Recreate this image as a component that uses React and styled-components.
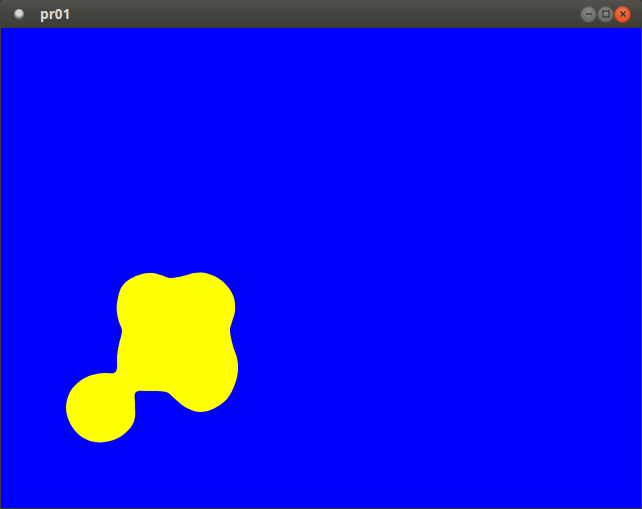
import React from "react";
import styled, { createGlobalStyle } from "styled-components";

const Global = createGlobalStyle`
  html, body { margin: 0; padding: 0; background: #3c3b37; }
  body { width: 642px; height: 509px; overflow: hidden; }
`;

const Window = styled.div`
  width: 642px;
  height: 509px;
  display: flex;
  flex-direction: column;
  background: #3c3b37;
`;

const TitleBar = styled.div`
  height: 28px;
  flex: 0 0 28px;
  display: flex;
  align-items: center;
  padding: 0 11px 0 11px;
  box-sizing: border-box;
  background: linear-gradient(#52514c, #45443f 45%, #3c3b37);
  border-radius: 4px 4px 0 0;
`;

const AppIcon = styled.div`
  width: 10px;
  height: 10px;
  border-radius: 50%;
  margin-left: 3px;
  background: radial-gradient(circle at 50% 40%, #dad8d2 0 35%, #8c8a84 60%, #3a3935 100%);
  box-shadow: 0 1px 0 rgba(255, 255, 255, 0.15);
`;

const Title = styled.span`
  margin-left: 16px;
  font-family: "Open Sans", "DejaVu Sans", sans-serif;
  font-weight: 700;
  font-size: 13.5px;
  color: #dfdbd2;
  letter-spacing: 0.1px;
  flex: 1;
  line-height: 1;
  margin-top: 1px;
`;

const Buttons = styled.div`
  display: flex;
  align-items: center;
`;

const WinButton = styled.div`
  width: 17px;
  height: 17px;
  border-radius: 50%;
  display: flex;
  align-items: center;
  justify-content: center;
  background: ${(p) =>
    p.$close
      ? "radial-gradient(circle at 50% 35%, #f5784a, #e4542a 60%, #c84218)"
      : "radial-gradient(circle at 50% 35%, #8a8984, #6e6d68 60%, #5a5954)"};
  box-shadow: inset 0 0 0 1px rgba(0, 0, 0, 0.25);
`;

const Canvas = styled.div`
  flex: 1;
  position: relative;
  background: #0000ff;
  border: 1px solid #3c3b37;
  border-top: none;
`;

const Drawing = styled.svg`
  position: absolute;
  inset: 0;
  width: 100%;
  height: 100%;
  display: block;
`;

const pts = [
  [117, 303], [121, 288], [130, 279], [142, 274], [152, 273], [161, 275], [170, 278],
  [183, 276], [194, 273], [205, 273], [218, 278], [228, 287], [234, 298], [235, 311],
  [232, 322], [230, 331], [233, 346], [237, 358], [238, 370], [235, 384], [227, 399],
  [213, 409], [199, 412], [185, 407], [174, 398], [166, 392], [150, 391], [136, 392],
  [135, 404], [135, 417], [131, 427], [120, 437], [105, 442], [90, 441], [77, 433],
  [69, 421], [66, 407], [70, 392], [80, 381], [92, 375], [105, 373], [114, 373],
  [117, 368], [117, 357], [119, 344], [122, 331], [119, 322], [117, 313],
];

function smoothPath(p) {
  const n = p.length;
  let d = `M${p[0][0]},${p[0][1]}`;
  for (let i = 0; i < n; i++) {
    const p0 = p[(i - 1 + n) % n];
    const p1 = p[i];
    const p2 = p[(i + 1) % n];
    const p3 = p[(i + 2) % n];
    const c1x = p1[0] + (p2[0] - p0[0]) / 6;
    const c1y = p1[1] + (p2[1] - p0[1]) / 6;
    const c2x = p2[0] - (p3[0] - p1[0]) / 6;
    const c2y = p2[1] - (p3[1] - p1[1]) / 6;
    d += ` C${c1x.toFixed(1)},${c1y.toFixed(1)} ${c2x.toFixed(1)},${c2y.toFixed(1)} ${p2[0]},${p2[1]}`;
  }
  return d + "Z";
}

const blobPath = smoothPath(pts);

export default function App() {
  return (
    <>
      <Global />
      <Window>
        <TitleBar>
          <AppIcon />
          <Title>pr01</Title>
          <Buttons>
            <WinButton>
              <svg width="10" height="10" viewBox="0 0 10 10">
                <path d="M2 5H8" stroke="#3c3b37" strokeWidth="1.5" />
              </svg>
            </WinButton>
            <WinButton>
              <svg width="10" height="10" viewBox="0 0 10 10">
                <rect x="2" y="2" width="6" height="6" fill="none" stroke="#3c3b37" strokeWidth="1.3" />
              </svg>
            </WinButton>
            <WinButton $close>
              <svg width="10" height="10" viewBox="0 0 10 10">
                <path d="M2.5 2.5L7.5 7.5M7.5 2.5L2.5 7.5" stroke="#3c3b37" strokeWidth="1.5" />
              </svg>
            </WinButton>
          </Buttons>
        </TitleBar>
        <Canvas>
          <Drawing viewBox="1 28 640 480" preserveAspectRatio="none">
            <path d={blobPath} fill="#ffff00" />
          </Drawing>
        </Canvas>
      </Window>
    </>
  );
}
